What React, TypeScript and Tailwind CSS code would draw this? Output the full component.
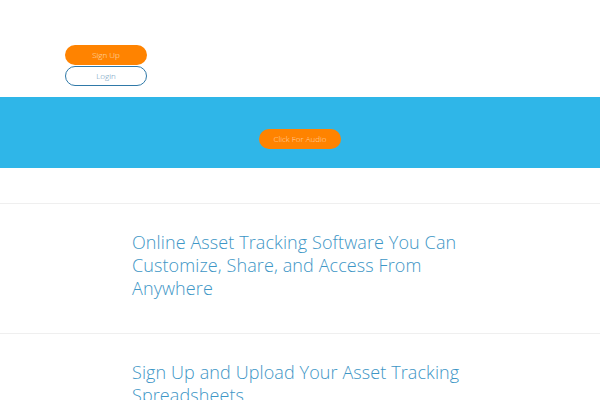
export default function App() {
  return (
    <div className="min-h-[400px] bg-white" style={{ fontFamily: '"Open Sans", "Liberation Sans", sans-serif' }}>
      <div className="flex flex-col gap-[1px] pl-[65px] pt-[45px] pb-[11px]">
        <button className="w-[82px] h-[20px] rounded-full bg-[#ff8300] text-[8px] text-[#ffe0c2] font-light leading-none">
          Sign Up
        </button>
        <button className="w-[82px] h-[20px] rounded-full border border-[#2f79a8] bg-white text-[8px] text-[#5b8fb5] font-light leading-none">
          Login
        </button>
      </div>

      <div className="flex h-[71px] items-start justify-center bg-[#2fb6e8] pt-[32px]">
        <button className="w-[82px] h-[20px] rounded-full bg-[#ff8300] text-[8px] text-[#ffd7b0] font-light leading-none">
          Click For Audio
        </button>
      </div>

      <div className="h-[35px]" />

      <section className="border-t border-[#efefef] pl-[132px] pr-[100px] pt-[27px] pb-[33px]">
        <h2 className="text-[18px] leading-[23px] font-light tracking-[0.1px] text-[#3d96c6]">
          Online Asset Tracking Software You Can Customize, Share, and Access From Anywhere
        </h2>
      </section>

      <section className="border-t border-[#efefef] pl-[132px] pr-[100px] pt-[27px] pb-[33px]">
        <h2 className="text-[18px] leading-[23px] font-light tracking-[0.1px] text-[#3d96c6]">
          Sign Up and Upload Your Asset Tracking Spreadsheets
        </h2>
      </section>
    </div>
  );
}
